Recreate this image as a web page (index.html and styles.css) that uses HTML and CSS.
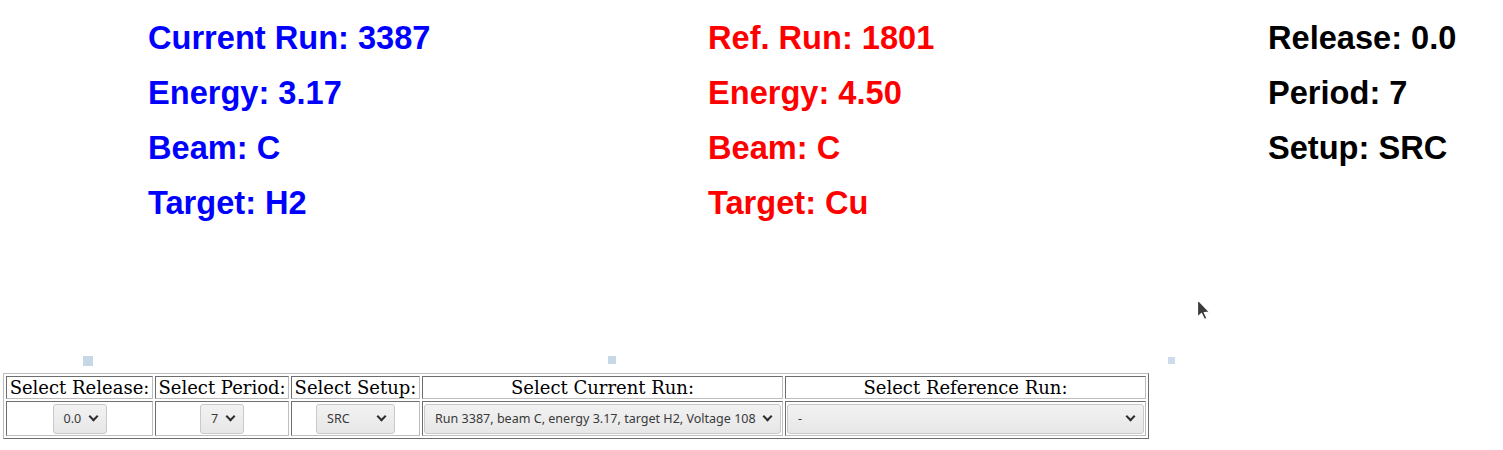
FILE: index.html
```html
<!DOCTYPE html>
<html>
<head>
<meta charset="utf-8">
<link rel="stylesheet" href="styles.css">
</head>
<body>
<div class="info">
  <div class="col cur">
    <div class="line">Current Run: 3387</div>
    <div class="line">Energy: 3.17</div>
    <div class="line">Beam: C</div>
    <div class="line">Target: H2</div>
  </div>
  <div class="col ref">
    <div class="line">Ref. Run: 1801</div>
    <div class="line">Energy: 4.50</div>
    <div class="line">Beam: C</div>
    <div class="line">Target: Cu</div>
  </div>
  <div class="col meta">
    <div class="line">Release: 0.0</div>
    <div class="line">Period: 7</div>
    <div class="line">Setup: SRC</div>
  </div>
</div>
<div class="marks">
  <div class="mcol"><span class="mark m1"></span></div>
  <div class="mcol"><span class="mark m2"></span></div>
  <div class="mcol"><span class="mark m3"></span></div>
</div>
<table class="controls">
  <tr class="head">
    <td class="c1">Select Release:</td>
    <td class="c2">Select Period:</td>
    <td class="c3">Select Setup:</td>
    <td class="c4">Select Current Run:</td>
    <td class="c5">Select Reference Run:</td>
  </tr>
  <tr class="sel">
    <td><span class="dd w1"><span class="val">0.0</span><span class="chev"></span></span></td>
    <td><span class="dd w2"><span class="val">7</span><span class="chev"></span></span></td>
    <td><span class="dd w3"><span class="val">SRC</span><span class="chev"></span></span></td>
    <td><span class="dd w4"><span class="val">Run 3387, beam C, energy 3.17, target H2, Voltage 108</span><span class="chev"></span></span></td>
    <td><span class="dd w5"><span class="val">-</span><span class="chev"></span></span></td>
  </tr>
</table>
<svg class="cursor" width="16" height="24" viewBox="0 0 16 24">
  <path d="M1.5 1.5 L1.5 19 L5.5 15.5 L8.5 21.5 L11 20.3 L8.2 14.5 L13.5 14.2 Z" fill="#3b3b3b" stroke="#ffffff" stroke-width="1.2" stroke-linejoin="round"/>
</svg>
</body>
</html>
```

FILE: styles.css
```css
html, body {
  margin: 0;
  padding: 0;
  background: #ffffff;
}
body {
  position: relative;
  overflow: hidden;
  height: 450px;
  font-family: "DejaVu Serif", serif;
}
.info {
  display: grid;
  grid-template-columns: 560px 560px 1fr;
  padding: 10px 0 0 48px;
}
.col {
  padding-left: 100px;
  font-family: "Liberation Sans", Arial, sans-serif;
  font-weight: bold;
  font-size: 32.6px;
}
.line {
  line-height: 55px;
  height: 55px;
  white-space: nowrap;
}
.cur { color: #0000ff; }
.ref { color: #ff0000; }
.meta { color: #000000; }

.marks {
  display: grid;
  grid-template-columns: 560px 560px 1fr;
  padding-left: 48px;
  margin-top: 125px;
  height: 11px;
}
.mcol { display: flex; align-items: flex-start; }
.mark {
  display: block;
  background: #c6d7e8;
}
.m1 { width: 10px; height: 10px; margin-left: 35px; margin-top: 1px; }
.m2 { width: 8px; height: 8px; margin-top: 1px; }
.m3 { width: 7px; height: 7px; margin-top: 2px; background: #ccdcec; }

.controls {
  margin: 7px 0 0 3px;
  border-collapse: separate;
  border-spacing: 2px;
  border: 1px solid;
  border-color: #bdbdbd #6e6e6e #6e6e6e #bdbdbd;
  table-layout: fixed;
  width: 1146px;
}
.controls td {
  border: 1px solid;
  border-color: #6e6e6e #bdbdbd #bdbdbd #6e6e6e;
  padding: 1px;
  text-align: center;
  vertical-align: middle;
  overflow: hidden;
}
.head td {
  font-family: "DejaVu Serif", serif;
  font-size: 18px;
  height: 19px;
  line-height: 19px;
  white-space: nowrap;
  color: #000;
}
.c1 { width: 143px; }
.c2 { width: 130px; }
.c3 { width: 125px; }
.c4 { width: 357px; }
.c5 { width: 357px; }
.sel td { height: 31px; }

.dd {
  display: inline-flex;
  align-items: center;
  box-sizing: border-box;
  height: 30px;
  padding: 0 9px 0 10px;
  border: 1px solid #c9c9c9;
  border-radius: 3px;
  background: linear-gradient(#f2f2f2, #e7e7e7);
  font-family: "Noto Sans", "DejaVu Sans", sans-serif;
  font-size: 12.55px;
  color: #3a3a3a;
  vertical-align: middle;
  white-space: nowrap;
}
.val { flex: 1; text-align: left; }
.chev {
  width: 5px;
  height: 5px;
  border-right: 2px solid #2e2e2e;
  border-bottom: 2px solid #2e2e2e;
  transform: translateY(-2px) rotate(45deg);
  margin-left: 6px;
}
.w1 { width: 54px; }
.w2 { width: 44px; }
.w3 { width: 79px; }
.w4 { width: 357px; }
.w5 { width: 357px; }

.cursor {
  position: absolute;
  left: 1196px;
  top: 298px;
}
```
